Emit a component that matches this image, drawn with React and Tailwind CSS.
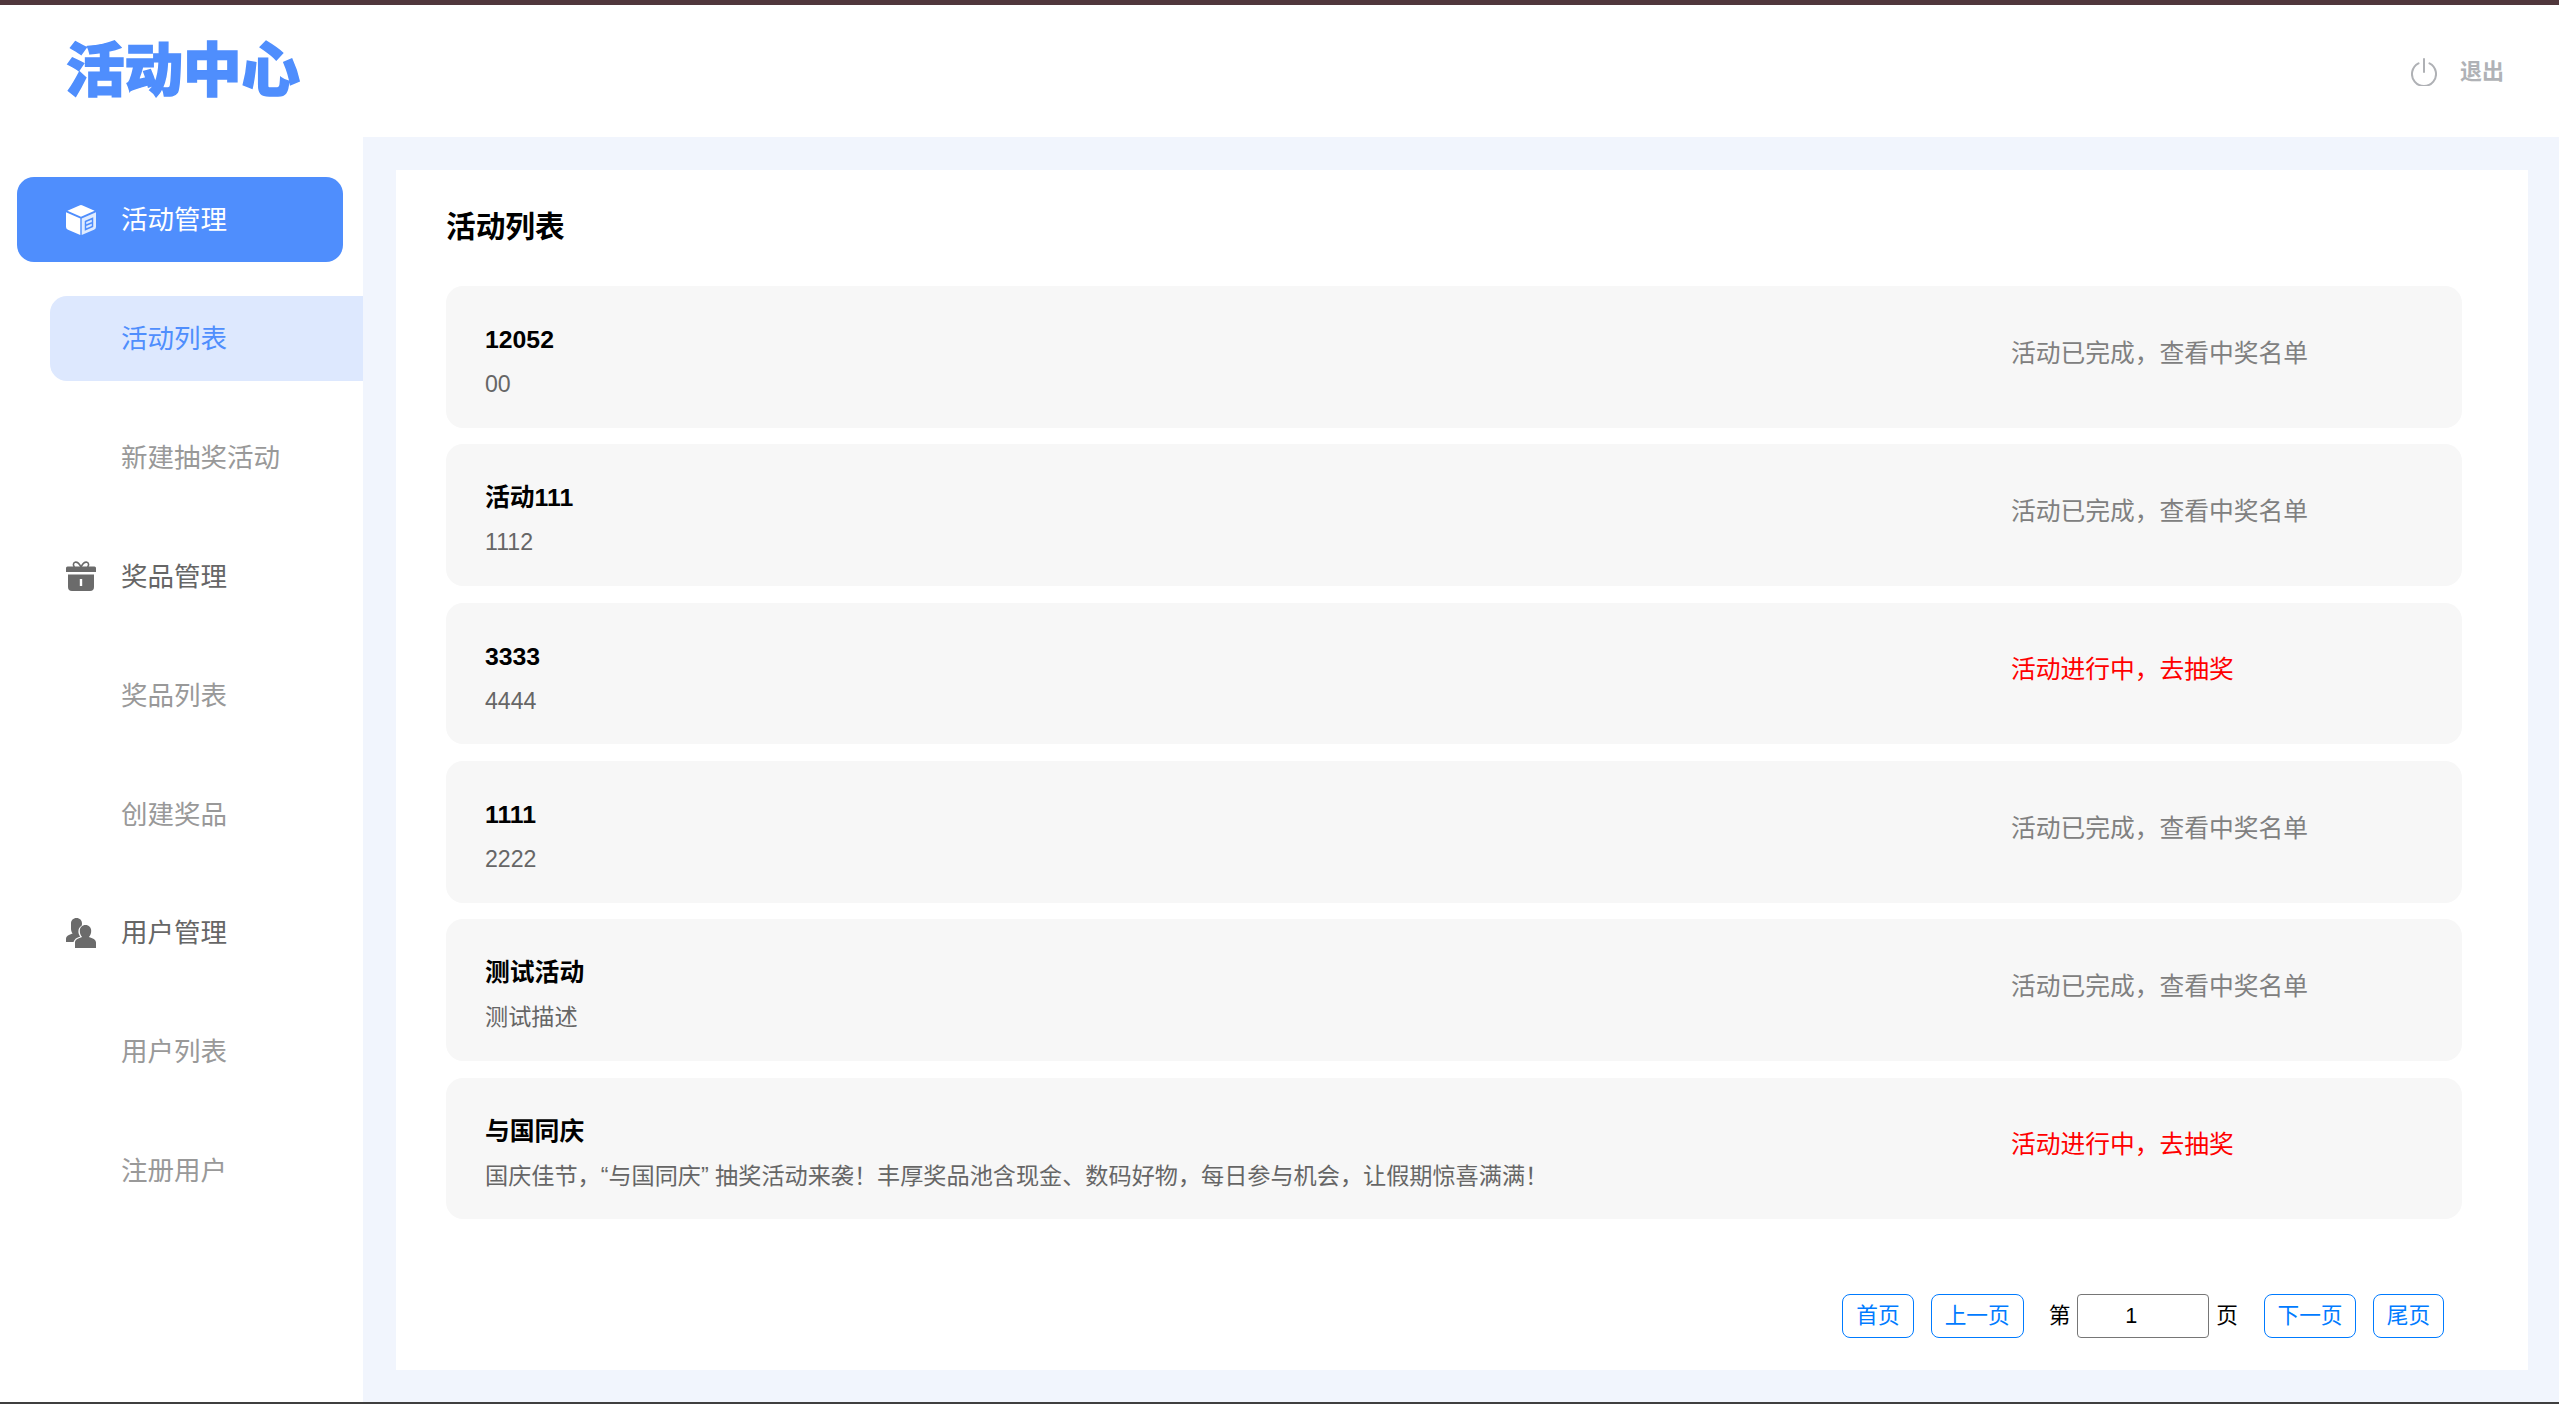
const FONT = 'font-["Liberation_Sans","Noto_Sans_CJK_SC",sans-serif]';

const ACTIVITIES = [
  { title: '12052', desc: '00', done: true },
  { title: '活动111', desc: '1112', done: true },
  { title: '3333', desc: '4444', done: false },
  { title: '1111', desc: '2222', done: true },
  { title: '测试活动', desc: '测试描述', done: true },
  {
    title: '与国同庆',
    desc: '国庆佳节，“与国同庆” 抽奖活动来袭！丰厚奖品池含现金、数码好物，每日参与机会，让假期惊喜满满！',
    done: false,
  },
];

function CubeIcon() {
  return (
    <svg width="30" height="30" viewBox="0 0 30 30" className="shrink-0">
      <path d="M13.400.4a3.800 3.800 0 0 1 3.200 0l12 5.300L15 11.800 1.400 5.700z" fill="#fff" />
      <path d="M0 7.300l14.300 6.300V30L2 24.800A3.200 3.200 0 0 1 0 22z" fill="#fff" />
      <path d="M30 7.300l-14.300 6.300V30L28 24.800a3.200 3.200 0 0 0 2-2.800z" fill="#fff" fillOpacity=".82" />
      <path d="M19.500 16.500l7-3v8l-7 3z" fill="none" stroke="#4f8efd" strokeWidth="1.500" />
      <path d="M20 20.300l6-2.600" stroke="#4f8efd" strokeWidth="1.500" />
    </svg>
  );
}

function GiftIcon() {
  return (
    <svg width="30" height="30" viewBox="0 0 30 30" className="shrink-0" fill="#6b6b6b">
      <path d="M15 6C13 2 11 .8 9 1.200 7 1.700 7 4.500 8.500 6M15 6c2-4 4-5.200 6-4.800 2 .5 2 3.300.5 4.800" fill="none" stroke="#6b6b6b" strokeWidth="1.600" />
      <path d="M1.500 5.500h27A1.500 1.500 0 0 1 30 7v4H0V7a1.500 1.500 0 0 1 1.500-1.500z" />
      <path fillRule="evenodd" d="M2 13.500h26V26a4 4 0 0 1-4 4H6a4 4 0 0 1-4-4zM13.800 18v7h2.400v-7z" />
    </svg>
  );
}

function UsersIcon() {
  return (
    <svg width="30" height="30" viewBox="0 0 30 30" className="shrink-0" fill="#6b6b6b">
      <path d="M10.500 0c3.300 0 5.500 2.400 5.500 5.600 0 .8-.1 1.500-.4 2.200-2 1-3.200 3.100-3.200 5.700 0 2 .7 3.700 1.900 4.900-3.500 1-6 2.700-6.800 5.600H0v-3c0-2.600 3.100-4.400 6.600-5.400-1-1.200-1.600-3-1.600-5V5.600C5 2.400 7.200 0 10.500 0z" />
      <path d="M19.500 7c3.400 0 5.700 2.500 5.700 5.800 0 2.700-.8 4.800-2.300 6.200 3.600 1 7.100 2.700 7.100 5.500V30H9v-5.500c0-2.800 3.500-4.500 7.100-5.500-1.500-1.400-2.300-3.500-2.300-6.200C13.800 9.500 16.100 7 19.500 7z" />
    </svg>
  );
}

function PowerIcon() {
  return (
    <svg width="26" height="28" viewBox="0 0 26 28" className="shrink-0" fill="none" stroke="#afb1b5" strokeWidth="2" strokeLinecap="round">
      <path d="M13 1v13" />
      <path d="M7.500 5.300a12 12 0 1 0 11 0" />
    </svg>
  );
}

function GroupItem({ icon, label, active }) {
  return (
    <div
      className={`ml-[17px] mr-[20px] flex h-[85px] items-center gap-[25px] rounded-[17px] pl-[49px] text-[26.5px] ${
        active ? 'bg-[#4f8efd] text-white' : 'text-[#666666]'
      }`}
    >
      {icon}
      <span className="pt-[3px]">{label}</span>
    </div>
  );
}

function SubItem({ label, active }) {
  return (
    <div
      className={`ml-[50px] flex h-[85px] items-center rounded-l-[17px] pl-[71px] pt-[3px] text-[26.5px] ${
        active ? 'bg-[#dde8fe] text-[#4f8efd]' : 'text-[#999999]'
      }`}
    >
      {label}
    </div>
  );
}

function Sidebar() {
  return (
    <aside className="flex w-[363px] shrink-0 flex-col gap-[33.9px] bg-white pt-[40px]">
      <GroupItem icon={<CubeIcon />} label="活动管理" active />
      <SubItem label="活动列表" active />
      <SubItem label="新建抽奖活动" />
      <GroupItem icon={<GiftIcon />} label="奖品管理" />
      <SubItem label="奖品列表" />
      <SubItem label="创建奖品" />
      <GroupItem icon={<UsersIcon />} label="用户管理" />
      <SubItem label="用户列表" />
      <SubItem label="注册用户" />
    </aside>
  );
}

function ActivityRow({ item }) {
  return (
    <div className="flex h-[141.67px] items-center justify-between rounded-[17px] bg-[#f7f7f7] pl-[39px]">
      <div className="self-start pt-[39px]">
        <div className="text-[24.8px] font-bold leading-[30px] text-black">{item.title}</div>
        <div className="mt-[14px] text-[23.15px] leading-[30px] text-[#666666]">{item.desc}</div>
      </div>
      <div className={`w-[451px] pb-[7px] text-[24.75px] ${item.done ? 'text-[#808080]' : 'text-[#ff0000]'}`}>
        {item.done ? '活动已完成，查看中奖名单' : '活动进行中，去抽奖'}
      </div>
    </div>
  );
}

function PageButton({ children, width }) {
  return (
    <button className={`h-[44px] ${width} rounded-[8px] border-[1.67px] border-[#007bff] bg-white text-[21.67px] text-[#007bff]`}>
      {children}
    </button>
  );
}

function Pagination() {
  return (
    <div className="mt-[75px] flex items-center justify-end pr-[18px] text-[21.67px] text-black">
      <PageButton width="w-[71.5px]">首页</PageButton>
      <div className="ml-[17px]">
        <PageButton width="w-[93px]">上一页</PageButton>
      </div>
      <span className="ml-[25px]">第</span>
      <input
        readOnly
        value="1"
        className="ml-[7px] h-[44px] w-[132px] rounded-[4px] border-[1.67px] border-[#767676] bg-white pr-[24px] text-center text-[21.67px] text-black outline-none"
      />
      <span className="ml-[7px]">页</span>
      <div className="ml-[26px]">
        <PageButton width="w-[92px]">下一页</PageButton>
      </div>
      <div className="ml-[17px]">
        <PageButton width="w-[71px]">尾页</PageButton>
      </div>
    </div>
  );
}

export default function App() {
  return (
    <div className={`flex h-screen w-full flex-col border-t-[5px] border-b-[2px] border-t-[#50373c] border-b-[#3f3f3f] bg-white ${FONT}`}>
      <header className="flex h-[132px] shrink-0 items-center justify-between pl-[66px] pr-[55px]">
        <div className="text-[58.5px] font-black leading-none text-[#4f8efd] [-webkit-text-stroke:1.5px_#4f8efd]">活动中心</div>
        <div className="flex items-center gap-[23px] pt-[1px] text-[22px] font-bold text-[#b0b2b6]">
          <PowerIcon />
          <span>退出</span>
        </div>
      </header>
      <div className="flex min-h-0 flex-1">
        <Sidebar />
        <main className="min-w-0 flex-1 bg-[#f1f5fd] pb-[32px] pl-[33px] pr-[31px] pt-[33px]">
          <div className="h-full bg-white pl-[50px] pr-[66px] pt-[37px]">
            <h1 className="mb-[39px] h-[40px] text-[29.7px] font-bold leading-[40px] text-black">活动列表</h1>
            <div className="flex flex-col gap-[16.67px]">
              {ACTIVITIES.map((item) => (
                <ActivityRow key={item.title} item={item} />
              ))}
            </div>
            <Pagination />
          </div>
        </main>
      </div>
    </div>
  );
}
